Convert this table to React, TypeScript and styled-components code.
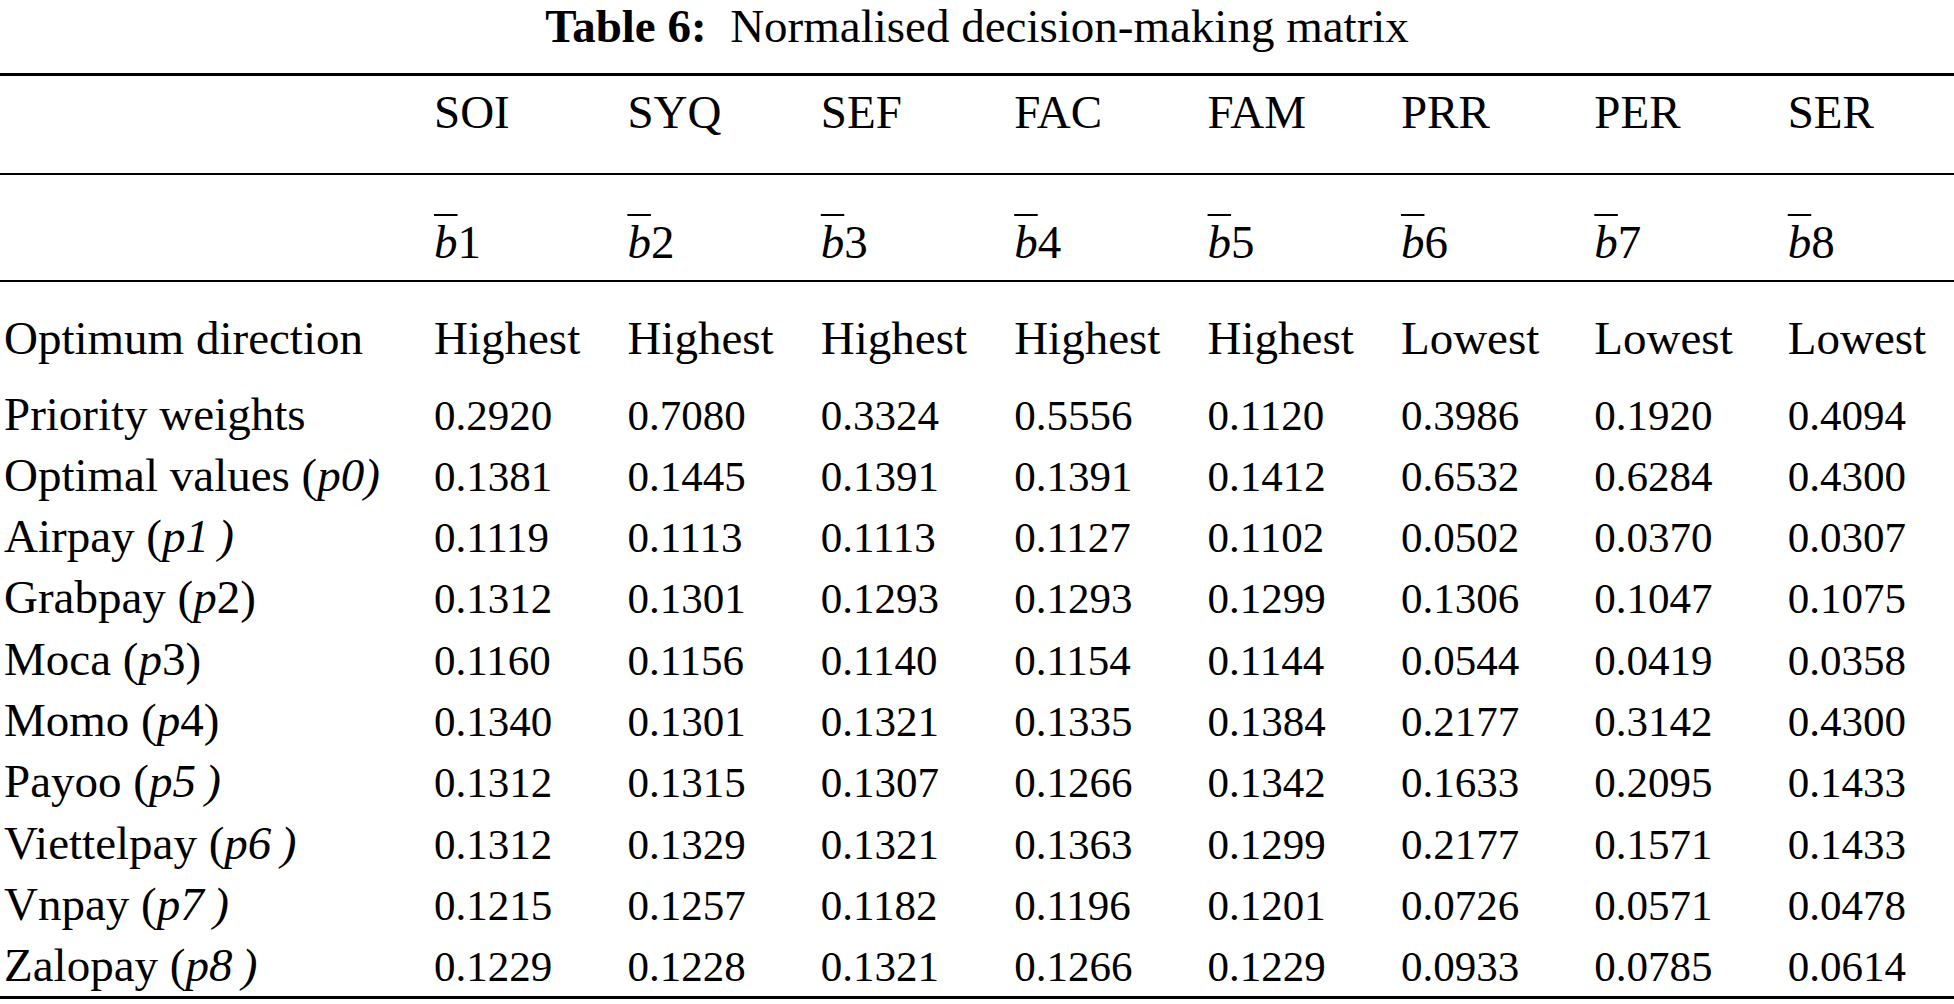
import React from "react";
import styled, { createGlobalStyle } from "styled-components";

const GlobalStyle = createGlobalStyle`
  html, body {
    margin: 0;
    padding: 0;
    background: #fff;
  }
  body {
    font-family: "Liberation Serif", "Times New Roman", serif;
    color: #000;
  }
`;

const Page = styled.div`
  width: 1954px;
  min-height: 1004px;
  background: #fff;
`;

const Caption = styled.div`
  text-align: center;
  font-size: 47px;
  line-height: 52px;
  margin-bottom: 21px;
  white-space: nowrap;
`;

const Bold = styled.span`
  font-weight: 700;
`;

const Table = styled.table`
  width: 100%;
  border-collapse: collapse;
  table-layout: fixed;
  border-top: 3px solid #000;
  border-bottom: 3px solid #000;
`;

const LabelCol = styled.col`
  width: 432px;
`;

const ValueCol = styled.col`
  width: 193.4px;
`;

const RuleRow = styled.tr`
  border-top: 2px solid #000;
`;

const HeadCell = styled.th<{ $label?: boolean; $pt: number; $pb: number; $rule?: boolean }>`
  text-align: left;
  font-weight: 400;
  font-size: 47px;
  line-height: 52px;
  white-space: nowrap;
  vertical-align: baseline;
  padding: ${(p) => p.$pt}px 0 ${(p) => p.$pb}px ${(p) => (p.$label ? 4 : 2)}px;
  border-bottom: ${(p) => (p.$rule ? "2px solid #000" : "none")};
`;

const Bar = styled.i`
  text-decoration: overline;
  text-decoration-thickness: 2px;
`;

const I = styled.i`
  font-style: italic;
`;

const LabelCell = styled.td<{ $first?: boolean }>`
  font-size: 47px;
  line-height: 61.3px;
  white-space: nowrap;
  vertical-align: baseline;
  padding: ${(p) => (p.$first ? 6.5 : 0)}px 0 0 4px;
`;

const NumCell = styled.td<{ $first?: boolean }>`
  font-size: 43px;
  line-height: 1;
  white-space: nowrap;
  vertical-align: baseline;
  padding: ${(p) => (p.$first ? 6.5 : 0)}px 0 0 2px;
`;

const criteria = [
  { code: "SOI", idx: "1", dir: "Highest" },
  { code: "SYQ", idx: "2", dir: "Highest" },
  { code: "SEF", idx: "3", dir: "Highest" },
  { code: "FAC", idx: "4", dir: "Highest" },
  { code: "FAM", idx: "5", dir: "Highest" },
  { code: "PRR", idx: "6", dir: "Lowest" },
  { code: "PER", idx: "7", dir: "Lowest" },
  { code: "SER", idx: "8", dir: "Lowest" },
];

const rows: { key: string; label: React.ReactNode; values: string[] }[] = [
  {
    key: "weights",
    label: "Priority weights",
    values: ["0.2920", "0.7080", "0.3324", "0.5556", "0.1120", "0.3986", "0.1920", "0.4094"],
  },
  {
    key: "p0",
    label: (
      <>
        Optimal values (<I>p0)</I>
      </>
    ),
    values: ["0.1381", "0.1445", "0.1391", "0.1391", "0.1412", "0.6532", "0.6284", "0.4300"],
  },
  {
    key: "p1",
    label: (
      <>
        Airpay (<I>p1&thinsp;)</I>
      </>
    ),
    values: ["0.1119", "0.1113", "0.1113", "0.1127", "0.1102", "0.0502", "0.0370", "0.0307"],
  },
  {
    key: "p2",
    label: (
      <>
        Grabpay (<I>p</I>2)
      </>
    ),
    values: ["0.1312", "0.1301", "0.1293", "0.1293", "0.1299", "0.1306", "0.1047", "0.1075"],
  },
  {
    key: "p3",
    label: (
      <>
        Moca (<I>p</I>3)
      </>
    ),
    values: ["0.1160", "0.1156", "0.1140", "0.1154", "0.1144", "0.0544", "0.0419", "0.0358"],
  },
  {
    key: "p4",
    label: (
      <>
        Momo (<I>p</I>4)
      </>
    ),
    values: ["0.1340", "0.1301", "0.1321", "0.1335", "0.1384", "0.2177", "0.3142", "0.4300"],
  },
  {
    key: "p5",
    label: (
      <>
        Payoo (<I>p5&thinsp;)</I>
      </>
    ),
    values: ["0.1312", "0.1315", "0.1307", "0.1266", "0.1342", "0.1633", "0.2095", "0.1433"],
  },
  {
    key: "p6",
    label: (
      <>
        Viettelpay (<I>p6&thinsp;)</I>
      </>
    ),
    values: ["0.1312", "0.1329", "0.1321", "0.1363", "0.1299", "0.2177", "0.1571", "0.1433"],
  },
  {
    key: "p7",
    label: (
      <>
        Vnpay (<I>p7&thinsp;)</I>
      </>
    ),
    values: ["0.1215", "0.1257", "0.1182", "0.1196", "0.1201", "0.0726", "0.0571", "0.0478"],
  },
  {
    key: "p8",
    label: (
      <>
        Zalopay (<I>p8&thinsp;)</I>
      </>
    ),
    values: ["0.1229", "0.1228", "0.1321", "0.1266", "0.1229", "0.0933", "0.0785", "0.0614"],
  },
];

function App() {
  return (
    <Page>
      <GlobalStyle />
      <Caption>
        <Bold>Table 6:</Bold>&nbsp;&nbsp;Normalised decision-making matrix
      </Caption>
      <Table>
        <colgroup>
          <LabelCol />
          {criteria.slice(0, 7).map((c) => (
            <ValueCol key={c.code} />
          ))}
          <col />
        </colgroup>
        <thead>
          <tr>
            <HeadCell $label $pt={10} $pb={35} />
            {criteria.map((c) => (
              <HeadCell key={c.code} $pt={10} $pb={35} $rule>
                {c.code}
              </HeadCell>
            ))}
          </tr>
          <RuleRow>
            <HeadCell $label $pt={41} $pb={12} />
            {criteria.map((c) => (
              <HeadCell key={c.code} $pt={41} $pb={12}>
                <Bar>b</Bar>
                {c.idx}
              </HeadCell>
            ))}
          </RuleRow>
          <RuleRow>
            <HeadCell $label $pt={30} $pb={13}>
              Optimum direction
            </HeadCell>
            {criteria.map((c) => (
              <HeadCell key={c.code} $pt={30} $pb={13}>
                {c.dir}
              </HeadCell>
            ))}
          </RuleRow>
        </thead>
        <tbody>
          {rows.map((r, i) => (
            <tr key={r.key}>
              <LabelCell $first={i === 0}>{r.label}</LabelCell>
              {r.values.map((v, j) => (
                <NumCell key={j} $first={i === 0}>
                  {v}
                </NumCell>
              ))}
            </tr>
          ))}
        </tbody>
      </Table>
    </Page>
  );
}

export default App;
